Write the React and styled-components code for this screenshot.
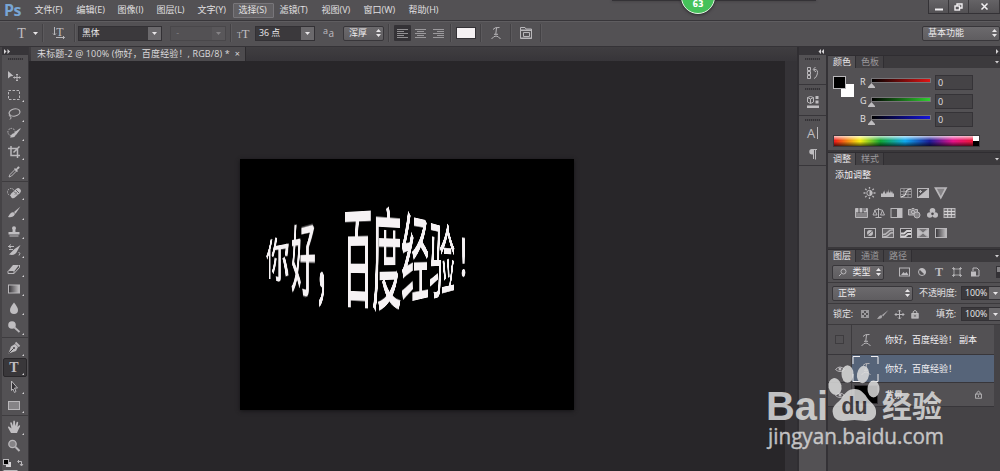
import React from 'react'
import styled, { createGlobalStyle } from 'styled-components'

const GlobalStyle = createGlobalStyle`
  * { box-sizing: border-box; }
  body {
    margin: 0;
    overflow: hidden;
    background: #282629;
    color: #e2e0e2;
    font-family: "Open Sans", "Noto Sans CJK SC", sans-serif;
    font-size: 9px;
    line-height: 12px;
  }
  svg { display: block; flex: none; overflow: visible; }
`

const Window = styled.div`
  display: flex;
  flex-direction: column;
  position: relative;
  width: 1000px;
  height: 471px;
  overflow: hidden;
  white-space: nowrap;
`

const MenuBar = styled.div`
  display: flex;
  align-items: center;
  flex: none;
  height: 21px;
  background: #535154;
  border-bottom: 1px solid #38363a;
`

const Logo = styled.div`
  width: 28.5px;
  padding-left: 4px;
  color: #78a5d4;
  font: bold 16px/18px "Open Sans", sans-serif;
  letter-spacing: -0.5px;
`

const MenuItem = styled.div`
  width: ${props => props.$w}px;
  height: 15px;
  padding-left: 5px;
  line-height: 12px;
  font-size: 9px;
  letter-spacing: 0;
  border: 1px solid ${props => props.$open ? '#78767a' : 'transparent'};
  border-radius: 1px;
  background: ${props => props.$open ? '#626063' : 'transparent'};
`

const WindowButtons = styled.div`
  display: flex;
  align-self: flex-start;
  margin-left: auto;
  height: 14px;
  border: 1px solid #343236;
  border-width: 0 0 1px 1px;
  background: linear-gradient(#656366, #535154);
`

const WindowButton = styled.div`
  display: flex;
  align-items: center;
  justify-content: center;
  width: ${props => props.$w}px;
  border-right: 1px solid #3a383b;
`

const Badge = styled.div`
  position: absolute;
  left: 681px;
  top: -20px;
  width: 34px;
  height: 34px;
  padding-top: 18px;
  border: 1.5px solid #e4f3e5;
  border-radius: 50%;
  background: #45c15a;
  box-shadow: 0 1px 3px #2c2a2d;
  color: #fff;
  font: bold 8px/12px "DejaVu Sans", sans-serif;
  text-align: center;
`

const BadgeShade = styled.div`
  position: absolute;
  left: 612px;
  top: 0;
  width: 204px;
  height: 1px;
  background: #343236;
  box-shadow: 0 0 3px #302e32;
`

const OptionsBar = styled.div`
  display: flex;
  align-items: center;
  flex: none;
  height: 26px;
  padding-bottom: 2px;
  background: #535154;
  border-top: 1px solid #5f5d60;
  border-bottom: 1px solid #353337;
`

const Slot = styled.div`
  display: flex;
  align-items: center;
  justify-content: center;
  flex: none;
  width: ${props => props.$w}px;
  height: 16px;
  border-radius: 1px;
  background: ${props => props.$active ? '#343236' : 'transparent'};
`

const Divider = styled.div`
  flex: none;
  width: 2px;
  height: 18px;
  background: #444245;
  border-right: 1px solid #5c5a5d;
`

const Combo = styled.div`
  display: flex;
  align-items: center;
  flex: none;
  width: ${props => props.$w}px;
  height: ${props => props.$h || 15}px;
  padding-left: 3px;
  border: 1px solid ${props => props.$dim ? '#49474a' : '#333135'};
  background: ${props => props.$dim ? '#535154' : '#3b393c'};
  color: ${props => props.$dim ? '#858386' : '#eceaec'};
  font-size: 8.8px;
`

const ComboArrow = styled.div`
  display: flex;
  align-items: center;
  justify-content: center;
  align-self: stretch;
  width: 13px;
  margin-left: auto;
  background: ${props => props.$dim ? '#59575a' : '#6b696c'};
`

const Select = styled.div`
  display: flex;
  align-items: center;
  justify-content: space-between;
  flex: none;
  width: ${props => props.$w}px;
  height: ${props => props.$h || 15}px;
  padding: 0 2px 0 5px;
  border: 1px solid #38363a;
  border-radius: 2px;
  background: linear-gradient(#6c6a6d, #5f5d60);
  color: #eceaec;
  font-size: 9px;
`

const ColorChip = styled.div`
  flex: none;
  width: 20px;
  height: 12px;
  border: 1px solid #343236;
  background: #f5f1f3;
`

const Workspace = styled.div`
  display: flex;
  flex: 1;
  min-height: 0;
`

const Toolbar = styled.div`
  display: flex;
  flex-direction: column;
  flex: none;
  width: 29px;
  border-left: 2px solid #454346;
  border-right: 1px solid #38363a;
  background: #535154;
`

const StripHeader = styled.div`
  display: flex;
  align-items: center;
  justify-content: ${props => props.$end ? 'space-between' : 'flex-start'};
  flex: none;
  height: 8px;
  padding: 0 1px;
  background: #373539;
`

const Grip = styled.div`
  flex: none;
  width: 15px;
  height: 2px;
  margin: ${props => props.$m || '3px auto 0'};
  background: repeating-linear-gradient(90deg, #343236 0 1px, #49474a 1px 2px);
`

const VerticalGrip = styled.div`
  width: 2px;
  height: 15px;
  margin: 0 10px 0 4px;
  background: repeating-linear-gradient(#3d3b3e 0 1px, #5d5b5e 1px 2px);
`

const ToolGroup = styled.div`
  flex: none;
  padding: 0 1px;
  margin-bottom: 1px;
  border-bottom: 1px solid ${props => props.$last ? 'transparent' : '#3e3c3f'};
`

const Tool = styled.div`
  display: flex;
  align-items: center;
  justify-content: center;
  position: relative;
  height: 19.2px;
  padding-right: 2px;
  border-radius: 2px;
  border: 1px solid ${props => props.$active ? '#29272a' : 'transparent'};
  background: ${props => props.$active ? '#39373a' : 'transparent'};
  &:after {
    content: "";
    display: ${props => props.$plain ? 'none' : 'block'};
    position: absolute;
    right: 2px;
    bottom: 1px;
    border: 1px solid #d5d3d5;
    border-left-color: transparent;
    border-top-color: transparent;
  }
`

const Document = styled.div`
  display: flex;
  flex-direction: column;
  flex: 1;
  min-width: 0;
`

const TabStrip = styled.div`
  flex: none;
  height: 14px;
  padding-left: 2px;
  background: linear-gradient(#403e41, #373539);
`

const DocumentTab = styled.div`
  display: flex;
  align-items: center;
  justify-content: space-between;
  width: 215px;
  height: 14px;
  padding: 0 5px 0 6px;
  background: #4d4b4e;
  border-right: 1px solid #2d2b2e;
  font-size: 9px;
  letter-spacing: 0.13px;
  color: #dcdadc;
`

const Stage = styled.div`
  display: flex;
  flex: 1;
  align-items: flex-start;
  padding: 98px 0 0 211px;
  border-right: 12px solid #353337;
  background: #282629;
`

const Artboard = styled.div`
  position: relative;
  width: 334px;
  height: 251px;
  background: #000;
  box-shadow: 0 1px 4px #151416;
`

// Every glyph is squeezed into a trapezoid, $l and $r being its left and right heights
const EM = 60
const warp = ({ $w, $l, $r }) => {
  const g = ($l / $r - 1) / EM
  const a = $w * (1 + g * EM) / EM
  return `matrix3d(${a},0,0,${g.toFixed(7)}, 0,${$l / EM},0,0, 0,0,1,0, 0,0,0,1)`
}

const Glyph = styled.span`
  position: absolute;
  left: ${props => props.$x}px;
  top: ${props => props.$y - EM * 0.556}px;
  width: ${EM}px;
  height: ${EM}px;
  color: #f6f2f4;
  font: 500 ${EM}px/${EM}px "Noto Sans CJK SC", sans-serif;
  transform-origin: 0 55.6%;
  transform: ${warp};
`

const Side = styled.div`
  display: flex;
  flex-direction: column;
  flex: none;
  width: 203px;
  border-left: 2px solid #302e32;
`

const SideColumns = styled.div`
  display: flex;
  flex: 1;
  min-height: 0;
`

const Dock = styled.div`
  flex: none;
  width: 29px;
  background: #535154;
  border-right: 2px solid #343236;
`

const DockGroup = styled.div`
  display: flow-root;
  height: ${props => props.$h}px;
  border-bottom: 1px solid #38363a;
`

const DockButton = styled.div`
  display: flex;
  align-items: center;
  justify-content: center;
  height: ${props => props.$h}px;
`

const Panels = styled.div`
  display: flex;
  flex-direction: column;
  flex: 1;
`

const PanelTabs = styled.div`
  display: flex;
  flex: none;
  height: 13px;
  background: #3c3a3d;
  border-top: 1px solid #2f2d31;
`

const PanelTab = styled.div`
  width: 28px;
  padding-left: 5px;
  border-right: 1px solid #302e32;
  background: ${props => props.$active ? '#535154' : '#434144'};
  color: ${props => props.$active ? '#e6e4e6' : '#9a989b'};
  font-size: 9px;
  line-height: 11px;
`

const FlyOut = styled.div`
  display: flex;
  align-items: center;
  margin-left: auto;
`

const ColorPanel = styled.div`
  flex: none;
  height: 84px;
  padding: 7px 0 0 5px;
  border-bottom: 2px solid #3a383b;
  background: #535154;
`

const ColorRows = styled.div`
  display: flex;
  height: 60px;
`

const Channels = styled.div`
  flex: 1;
`

const Channel = styled.div`
  display: flex;
  height: 18.5px;
`

const ChannelName = styled.div`
  width: 11px;
  font-size: 9px;
  line-height: 13px;
`

const Track = styled.div`
  width: 60px;
  height: 5px;
  margin-top: 3px;
  border: 1px solid #767477;
  background: linear-gradient(90deg, #000, ${props => props.$color});
`

const Knob = styled.svg`
  margin-left: -3px;
`

const ChannelValue = styled.div`
  width: 38px;
  height: 15px;
  margin-left: 4px;
  padding-left: 2px;
  border: 1px solid #353337;
  background: #454346;
  font-size: 9px;
  line-height: 14px;
`

const Spectrum = styled.div`
  display: flex;
  width: 147px;
  height: 12px;
  border: 1px solid #3b393c;
  background:
    linear-gradient(rgba(255,255,255,.75), rgba(255,255,255,0) 45%, rgba(0,0,0,0) 55%, rgba(0,0,0,.65)),
    linear-gradient(90deg, #f01818, #f6ee10 18%, #11a535 32%, #0fa8ee 49%, #1b1c96 66%, #e51288 82%, #ee1820);
`

const SpectrumEnds = styled.div`
  width: 6px;
  margin-left: auto;
  background: linear-gradient(#fff 50%, #000 50%);
`

const Adjustments = styled.div`
  flex: none;
  height: 84px;
  padding: 4px 0 0 7px;
  border-bottom: 2px solid #3a383b;
  background: #535154;
`

const AdjustRow = styled.div`
  display: flex;
  align-items: center;
  height: 20px;
  gap: 4.8px;
  padding-left: ${props => props.$indent}px;
`

const AdjustTitle = styled.div`
  height: 14px;
  font-size: 9px;
  color: #f2f0f2;
`

const Layers = styled.div`
  display: flex;
  flex-direction: column;
  flex: 1;
  background: #454346;
`

const LayerBar = styled.div`
  display: flex;
  align-items: center;
  flex: none;
  height: ${props => props.$h}px;
  padding-left: 4px;
  border-bottom: 1px solid #3c3a3d;
  background: #535154;
`

const BarLabel = styled.div`
  flex: none;
  width: ${props => props.$w}px;
  font-size: 9px;
  letter-spacing: -0.1px;
`

const Layer = styled.div`
  display: flex;
  align-items: center;
  flex: none;
  width: 166px;
  height: ${props => props.$h}px;
  background: linear-gradient(90deg, #535154 23px, ${props => props.$active ? '#566479' : '#535154'} 23px);
  border-bottom: 1px solid #38363a;
`

const Visibility = styled.div`
  display: flex;
  align-items: center;
  justify-content: center;
  align-self: stretch;
  width: 24px;
  border-right: 1px solid #3d3b3e;
`

const HiddenBox = styled.div`
  width: 9px;
  height: 9px;
  border: 1px solid #3e3c3f;
`

const Thumb = styled.div`
  display: flex;
  align-items: center;
  justify-content: center;
  width: 27px;
  height: 26px;
`

const LayerName = styled.div`
  flex: 1;
  padding-left: 6px;
  font: 9px/12px "Noto Sans CJK SC", sans-serif;
  color: #f4f2f4;
`

const Watermark = styled.svg`
  position: absolute;
  left: 760px;
  top: 358px;
`

const Icon = ({ w = 14, h = 14, children }) => (
  <svg width={w} height={h} viewBox={`0 0 ${w} ${h}`} fill="none" stroke="#b9b7ba" strokeWidth="1">
    {children}
  </svg>
)

const Down = ({ dim }) => (
  <svg width="5" height="3"><path d="M0 0H5L2.5 3Z" fill={dim ? '#858386' : '#e8e6e8'} /></svg>
)

const UpDown = () => (
  <svg width="5" height="8"><path d="M0 3H5L2.5 0ZM0 5H5L2.5 8Z" fill="#e8e6e8" /></svg>
)

const fill = { fill: '#bfbdc0', stroke: 'none' }
const serif = { ...fill, fontFamily: 'Liberation Serif', fontWeight: 'bold' }

const WarpIcon = () => (
  <Icon w={12} h={14}>
    <path d="M3 3.500Q4.500 1 9.500 1.500M6.500 1.800L5.800 8M4 8.300H8M1.500 13Q6 7 10.500 13" />
  </Icon>
)

const LockIcon = ({ size = 11 }) => (
  <svg width={size} height={size} viewBox="0 0 11 11" fill="none" stroke="#c6c4c6">
    <rect x="2" y="5" width="7" height="5" fill={size > 9 ? '#b0aeb0' : 'none'} />
    <path d="M3.5 5V3Q5.5 0 7.5 3V5" />
    <path d="M5.5 6.5V8.5" stroke={size > 9 ? '#454346' : '#c6c4c6'} />
  </svg>
)

const EyeIcon = () => (
  <Icon w={10} h={8}>
    <path d="M.5 4.5Q5-.5 9.5 4.5Q5 8.5.5 4.5Z" /><circle cx="5" cy="4" r="1.5" {...fill} />
  </Icon>
)

const MenuIcon = () => (
  <svg width="8" height="8"><path d="M0 3H4L2 5.5Z" fill="#d2d0d2" /><path d="M5 2.5H8M5 4.5H8M5 6.5H8" stroke="#858386" /></svg>
)

const tools = [
  [
    <><path d="M1 2L6.5 7L3.8 7.3L1 9.5Z" {...fill} /><path d="M10 5V12M6.5 8.5H13.5M9 6L10 5L11 6M9 11L10 12L11 11M7.5 7.5L6.5 8.5L7.5 9.5M12.5 7.5L13.5 8.5L12.5 9.5" /></>,
    <rect x="1.5" y="2.5" width="11" height="9" strokeDasharray="2.5 1.5" />,
    <><ellipse cx="7.5" cy="5.5" rx="5.5" ry="3.6" transform="rotate(-12 7.5 5.5)" strokeWidth="1.2" /><path d="M3 7.5Q1 9 3.5 9.5Q5 11 3 12.5" /></>,
    <><circle cx="4.5" cy="6" r="3.6" strokeDasharray="1.6 1" /><path d="M13.500 2L8 6L7 8.5L9 9L13.5 3Z" {...fill} /><path d="M3 11.500Q5 6 8.5 7.5Q9.500 12 3 11.500Z" {...fill} /></>,
    <path d="M4 1V10.5H13M1 3.5H10.5V13M6.500 7.500L12.5 1.5" strokeWidth="1.5" />,
    <><path d="M2 12L3 9.5L8 4.5L9.5 6L4.5 11Z" /><path d="M7 4L8 3L9 4L11 1.5Q13 1 12.5 3L10 5L11 6L10 7Z" {...fill} /></>
  ],
  [
    <><circle cx="4" cy="6" r="3.5" strokeDasharray="1.5 1" /><rect x="2.500" y="4.5" width="12" height="5.500" rx="2.500" transform="rotate(-42 8.5 7)" {...fill} /><path d="M7 5.5L10 8.5M9 4L12 7M8 8.5V8M9.5 6.5V6" stroke="#626063" /></>,
    <><path d="M13.5 1.5L7 7L8.5 8.7Z" {...fill} /><path d="M1 12Q4 6 7 7.5L8 9Q6 13 1 12Z" {...fill} /></>,
    <path d="M5 4.2A2 2 0 1 1 9 4.2Q8 6 8.5 8H12.5V10.5H1.5V8H5.5Q6 6 5 4.2M2.5 12.5H11.5V11.5H2.5Z" {...fill} />,
    <><path d="M1 3.5H7M2 6.5H6M11.5 9Q14 10 12 12.5M4 1.5L1.5 3.5L4 5" /><path d="M13.500 2L7.5 6L2 11.5Q8 13 10 8.5Z" {...fill} /></>,
    <><path d="M1 9L6 3H12L7.5 9Z" {...fill} /><path d="M1 9V11.5H7L12.5 5.5V3M7 11.5V9" /></>,
    <rect x="1.5" y="3" width="11" height="8" fill="url(#toolGradient)" />,
    <path d="M7 1.5Q11 6.5 11 9A4 4 0 0 1 3 9Q3 6.5 7 1.5Z" {...fill} />,
    <><circle cx="5" cy="5" r="3.8" {...fill} /><path d="M7.5 7.5L12.500 12" strokeWidth="1.8" /></>
  ],
  [
    <><path d="M1.500 12.500L4 5.5L8 3L11 6L9 10Z" {...fill} /><path d="M8.5 1.5L12.5 5.5" strokeWidth="2" /><path d="M2 12L6.5 7.5" stroke="#474548" /><circle cx="7" cy="7" r="1" fill="#474548" stroke="none" /></>,
    <text x="7" y="12" fontSize="14" textAnchor="middle" {...serif}>T</text>,
    <path d="M4.5 1L10.5 8H7.5L9 11.5L7.5 12.5L6 9L4.5 10.5Z" fill="#343236" />,
    <rect x="1.500" y="2.5" width="11" height="8" fill="#858386" />
  ],
  [
    <path d="M4 13L1.500 8.500Q0 6 2 6.500L4.500 8.500L3.200 3Q3.500 1.800 4.700 2.600L6 6L6.300 1Q7 0 7.900 1L8.300 6L9.700 2Q10.800 1.500 11.200 2.400L10.500 7L12.200 5.200Q13.500 5 13 6.500L10.800 11L10 13Z" {...fill} />,
    <><circle cx="5.5" cy="5" r="3.7" fill="#858386" strokeWidth="1.3" /><path d="M8.5 8L12.500 12" strokeWidth="2" /></>
  ]
]

const plainTools = ['0-0', '3-1']

const adjustments = [
  [
    <><circle cx="6.5" cy="6" r="2.7" /><path d="M6.5 3.3A2.7 2.7 0 0 1 6.5 8.7Z" {...fill} /><path d="M6.5 0V1.8M6.5 10.2V12M.5 6H2.5M10.5 6H12.5M2.2 1.7L3.6 3.1M9.4 8.9L10.8 10.3M10.8 1.7L9.4 3.1M3.6 8.9L2.2 10.3" strokeWidth="1.3" /></>,
    <path d="M0 10V7L1 6L2 7V4L3 6L4 3V6L5 7L6 4L7 6L8 2V6L9 5V3L10 6L11 4L12 7L13 6V10Z" {...fill} />,
    <><path d="M1.5 1.5H12.5V10.5H1.5ZM1 4.5H13M1 7.5H13M5 1V11M9 1V11" stroke="#918f92" /><path d="M2 10Q7 9 7 6Q7 2 12 2" stroke="#eceaec" /></>,
    <><rect x="1.5" y="1.5" width="11" height="9" /><path d="M1 11L13 1V11Z" {...fill} /><path d="M3 4.5H6M4.5 3V6" /></>,
    <path d="M1.5 1H12L6.8 10.8Z" fill="#858386" strokeWidth="1.7" />
  ],
  [
    <><path d="M.5 1.5H12.5V10.5H.5Z" fill="#858386" /><path d="M1 2H12V5H1Z" {...fill} /><path d="M4 1V6M8 1V6M10 1V4" stroke="#474548" /></>,
    <path d="M6.5 1V10.5M3.5 10.5H9.5M2 3.5L6.5 2L11 3.5M3 3.5L1 8H5L3 3.5M10.5 3.5L8.5 8H12.5L10.5 3.5" />,
    <><rect x="1" y="1.5" width="11" height="9" /><path d="M7 2H12V10.5H7Z" {...fill} /></>,
    <><path d="M.5 2.5H3L4 1.5H6L7 2.5H9.5V8H.5Z" fill="#858386" /><circle cx="5" cy="5" r="1.7" /><circle cx="9" cy="8" r="3" fill="#858386" /></>,
    <><circle cx="6.5" cy="3.7" r="2.8" {...fill} /><circle cx="3.8" cy="8" r="2.8" {...fill} /><circle cx="9.2" cy="8" r="2.8" {...fill} /><circle cx="6.5" cy="6.7" r="1.3" fill="#474548" stroke="none" /></>,
    <><rect x="1" y="1.5" width="11" height="9" fill="#767477" /><path d="M1 4.5H12M1 7.5H12M4.7 1.5V10.5M8.3 1.5V10.5" stroke="#d5d3d5" /></>
  ],
  [
    <><rect x="1.5" y="1.5" width="11" height="9" /><circle cx="7" cy="6" r="3" {...fill} /><path d="M4 8.500L10 3.500" stroke="#69676a" /></>,
    <><rect x="1.5" y="1.5" width="11" height="9" fill="#69676a" /><path d="M2 7.500Q5 7.500 7 5T12 3M2 10Q6 10 8 7.500T12 6" strokeWidth="1.4" /></>,
    <><rect x="1.5" y="1.5" width="11" height="9" fill="#474548" /><path d="M2 6.500H5L8 4H12M2 9.500H6L9 7H12" strokeWidth="1.8" stroke="#d5d3d5" /></>,
    <><rect x="1.5" y="1.5" width="11" height="9" fill="#767477" /><path d="M2 2L7 6L2 10ZM12 2L7 6L12 10Z" {...fill} /><path d="M2 1.5L7 6L12 1.5M2 10.5L7 6L12 10.5" strokeWidth=".8" /></>,
    <rect x="1.5" y="1.5" width="11" height="9" fill="url(#toolGradient)" />
  ]
]

const menus = [
  ['文件(F)', 42], ['编辑(E)', 41], ['图像(I)', 39], ['图层(L)', 41], ['文字(Y)', 41],
  ['选择(S)', 41], ['滤镜(T)', 42], ['视图(V)', 42], ['窗口(W)', 45], ['帮助(H)', 42]
]

const glyphs = [
  { c: '你', x: 26, y: 100, w: 24, l: 40, r: 56 },
  { c: '好', x: 50.5, y: 100, w: 25, l: 70, r: 87 },
  { c: '，', x: 75, y: 99, w: 28, l: 96, r: 106 },
  { c: '百', x: 103, y: 98.5, w: 29.5, l: 107, r: 111 },
  { c: '度', x: 131.5, y: 100, w: 29.5, l: 114, r: 108 },
  { c: '经', x: 161, y: 99, w: 28, l: 104, r: 89 },
  { c: '验', x: 189, y: 101, w: 26, l: 88, r: 71 },
  { c: '！', x: 217, y: 98.5, w: 22, l: 55, r: 43 }
]

const Options = () => (
  <OptionsBar>
    <VerticalGrip />
    <Slot $w={15}><Icon><text x="6.5" y="11.5" fontSize="14" textAnchor="middle" {...serif} fontWeight="normal">T</text></Icon></Slot>
    <Slot $w={13}><Down /></Slot>
    <Divider />
    <Slot $w={30}>
      <Icon w={14}>
        <text x="8" y="9.5" fontSize="12" textAnchor="middle" {...serif} fontWeight="normal">T</text>
        <path d="M2.5 1V9M1 7.5L2.5 9L4 7.5M4 11.5H12.5M11 10L12.5 11.5L11 13" />
      </Icon>
    </Slot>
    <Divider />
    <Slot $w={2} />
    <Combo $w={84}>黑体<ComboArrow><Down /></ComboArrow></Combo>
    <Slot $w={8} />
    <Combo $w={56} $dim>&nbsp;-<ComboArrow $dim><Down dim /></ComboArrow></Combo>
    <Slot $w={4} />
    <Divider />
    <Slot $w={23}>
      <Icon w={13}>
        <text x="8.5" y="12" fontSize="13" textAnchor="middle" {...serif} fontWeight="normal">T</text>
        <text x="2.5" y="12" fontSize="8" textAnchor="middle" {...serif} fontWeight="normal">T</text>
      </Icon>
    </Slot>
    <Combo $w={60}>36 点<ComboArrow><Down /></ComboArrow></Combo>
    <Slot $w={28}>
      <Icon w={12}>
        <text x="0" y="7.5" fontSize="9" {...fill} fontFamily="Open Sans">a</text>
        <text x="5.5" y="11" fontSize="10" {...fill} fontFamily="Open Sans">a</text>
      </Icon>
    </Slot>
    <Select $w={41}>浑厚<UpDown /></Select>
    <Slot $w={4} />
    <Divider />
    <Slot $w={4} />
    <Slot $w={17} $active><Icon w={11} h={11}><path d="M0 1.5H11M0 3.5H7M0 5.5H11M0 7.5H7M0 9.5H11" stroke="#918f92" /></Icon></Slot>
    <Slot $w={18}><Icon w={11} h={11}><path d="M0 1.5H11M2 3.5H9M0 5.5H11M2 7.5H9M0 9.5H11" stroke="#9b999c" /></Icon></Slot>
    <Slot $w={18}><Icon w={11} h={11}><path d="M0 1.5H11M4 3.5H11M0 5.5H11M4 7.5H11M0 9.5H11" stroke="#9b999c" /></Icon></Slot>
    <Slot $w={3} />
    <Divider />
    <Slot $w={4} />
    <ColorChip />
    <Slot $w={4} />
    <Divider />
    <Slot $w={28}><WarpIcon /></Slot>
    <Divider />
    <Slot $w={28}><Icon w={12} h={12}><path d="M.5 3.5V.5H5L6 2H11.5V11.5H.5V3.5H11.5M3.5 5.5H9.5V9.5H3.5Z" /><path d="M0 3H12M1 11H12" /></Icon></Slot>
    <Divider />
    <Slot $w={380} />
    <Select $w={78}>基本功能<UpDown /></Select>
  </OptionsBar>
)

const ToolPanel = () => (
  <Toolbar>
    <StripHeader><svg width="8" height="5"><path d="M1 0V5L3.5 2.5ZM4.5 0V5L7 2.5Z" fill="#d5d3d5" /></svg></StripHeader>
    <Grip $m="3px auto 6px" />
    {tools.map((group, i) => (
      <ToolGroup key={i} $last={i === 3}>
        {group.map((icon, j) => (
          <Tool key={j} $active={i === 2 && j === 1} $plain={plainTools.includes(i + '-' + j)}>
            <Icon>{icon}</Icon>
          </Tool>
        ))}
      </ToolGroup>
    ))}
    <Icon w={26} h={16}>
      <rect x="4" y="4" width="5" height="5" fill="#d5d3d5" stroke="none" />
      <rect x="1.5" y="1.5" width="5" height="5" fill="#000" />
      <path d="M16 3.5H19.5V7.5M17 2L15.5 3.5L17 5M18 6L19.5 8L21 6" />
      <rect x="2" y="12.500" width="13" height="9" fill="#000" />
    </Icon>
  </Toolbar>
)

const channels = [['R', '#e01414'], ['G', '#30d030'], ['B', '#1414dc']]

const ColorArea = () => (
  <ColorPanel>
    <ColorRows>
      <Icon w={27} h={26}>
        <rect x="8" y="9" width="13" height="13" fill="#fff" stroke="none" />
        <rect x="0.5" y="1.5" width="12" height="12" fill="#000" />
      </Icon>
      <Channels>
        {channels.map(([name, color]) => (
          <Channel key={name}>
            <ChannelName>{name}</ChannelName>
            <div>
              <Track $color={color} />
              <Knob width="7" height="5"><path d="M3.5 0L7 4V5H0V4Z" fill="#bfbdc0" /></Knob>
            </div>
            <ChannelValue>0</ChannelValue>
          </Channel>
        ))}
      </Channels>
    </ColorRows>
    <Spectrum><SpectrumEnds /></Spectrum>
  </ColorPanel>
)

const Tabs = ({ names }) => (
  <PanelTabs>
    {names.map((name, i) => <PanelTab key={name} $active={i === 0}>{name}</PanelTab>)}
    <FlyOut><MenuIcon /></FlyOut>
  </PanelTabs>
)

const LayersPanel = () => (
  <Layers>
    <LayerBar $h={21}>
      <Select $w={52} $h={15}>
        <Icon w={9} h={9}><circle cx="5.5" cy="3.5" r="2.5" /><path d="M3.5 5.5L1 8" /></Icon>类型<UpDown />
      </Select>
      <Slot $w={11} />
      <Slot $w={18}><Icon w={11} h={10}><rect x=".5" y="1" width="10" height="8" /><path d="M2 8L4.5 5L6 6.500L7.5 5L9.5 8Z" {...fill} /></Icon></Slot>
      <Slot $w={17}><Icon w={10} h={10}><circle cx="5" cy="5" r="3.500" /><path d="M2.2 2.2A4 4 0 0 1 7.8 7.8Z" {...fill} /></Icon></Slot>
      <Slot $w={18}><Icon w={10} h={12}><text x="5" y="10" fontSize="12" textAnchor="middle" {...serif}>T</text></Icon></Slot>
      <Slot $w={18}><Icon w={10} h={10}><path d="M2 2H8V8H2ZM0 1.5H3M1.5 0V3M7 1.5H10M8.5 0V3M0 8.5H3M1.5 7V10M7 8.5H10M8.5 7V10" strokeWidth=".8" /></Icon></Slot>
      <Slot $w={18}><Icon w={10} h={10}><path d="M3 4V1H7L9 3V9H6" /><rect x="1" y="4.5" width="5" height="5" {...fill} /></Icon></Slot>
      <Slot $w={12} />
      <Icon w={6} h={12}><rect x=".5" y=".5" width="9" height="11" fill="#343236" stroke="#343236" /><rect x="1" y="1" width="7" height="5" fill="#858386" stroke="none" /></Icon>
    </LayerBar>
    <LayerBar $h={21}>
      <Select $w={81}>正常<UpDown /></Select>
      <Slot $w={6} />
      <BarLabel $w={42}>不透明度:</BarLabel>
      <Combo $w={42} $h={14}>100%<ComboArrow><Down /></ComboArrow></Combo>
    </LayerBar>
    <LayerBar $h={21}>
      <Slot $w={1} />
      <BarLabel $w={24}>锁定:</BarLabel>
      <Slot $w={16}><Icon w={8} h={8}><g opacity=".7"><rect x=".5" y=".5" width="7" height="7" /><path d="M1 1H3V3H1ZM5 1H7V3H5ZM3 3H5V5H3ZM1 5H3V7H1ZM5 5H7V7H5Z" {...fill} /></g></Icon></Slot>
      <Slot $w={20}><Icon w={12} h={11}><g opacity=".8"><path d="M11.5 1L5 6L6 7.5Z" {...fill} /><path d="M0 10Q3 5 5 6.5Q6 10 0 10Z" {...fill} /></g></Icon></Slot>
      <Slot $w={13}><Icon w={11} h={11}><path d="M5.5 1V10M1 5.5H10M4 2.5L5.5 1L7 2.5M4 8.5L5.5 10L7 8.5M2.5 4L1 5.5L2.5 7M8.5 4L10 5.5L8.5 7" /></Icon></Slot>
      <Slot $w={18}><LockIcon size={10} /></Slot>
      <Slot $w={12} />
      <BarLabel $w={25}>填充:</BarLabel>
      <Combo $w={42} $h={14}>100%<ComboArrow><Down /></ComboArrow></Combo>
    </LayerBar>
    <Layer $h={30}>
      <Visibility><HiddenBox /></Visibility>
      <Thumb><WarpIcon /></Thumb>
      <LayerName>你好，百度经验！ 副本</LayerName>
    </Layer>
    <Layer $h={28} $active>
      <Visibility><EyeIcon /></Visibility>
      <Thumb>
        <Icon w={27} h={26}>
          <path d="M1 8V.5H8M19 .5H26V8M26 18V25.500H19M8 25.500H1V18" stroke="#f0eef0" />
          <g transform="translate(8 6)"><path d="M3 3.5Q4.5 1 9.5 1.5M6.5 1.8L5.8 8M4 8.3H8M1.5 13Q6 7 10.5 13" /></g>
        </Icon>
      </Thumb>
      <LayerName>你好，百度经验！</LayerName>
    </Layer>
    <Layer $h={24}>
      <Visibility><EyeIcon /></Visibility>
      <Thumb><Icon w={24} h={19}><rect x=".5" y=".5" width="23" height="18" fill="#000" stroke="#302e32" /></Icon></Thumb>
      <LayerName>背景</LayerName>
      <Slot $w={32}><LockIcon size={9} /></Slot>
    </Layer>
  </Layers>
)

const App = () => (
  <Window>
    <GlobalStyle />
    <svg width="0" height="0" style={{ position: 'absolute' }}>
      <defs>
        <linearGradient id="toolGradient"><stop stopColor="#343236" /><stop offset="1" stopColor="#c6c4c6" /></linearGradient>
      </defs>
    </svg>
    <MenuBar>
      <Logo>Ps</Logo>
      {menus.map(([name, w]) => <MenuItem key={name} $w={w} $open={name === '选择(S)'}>{name}</MenuItem>)}
      <WindowButtons>
        <WindowButton $w={20}><svg width="8" height="8"><path d="M0 6.5H8" stroke="#f2f0f2" strokeWidth="2" /></svg></WindowButton>
        <WindowButton $w={20}><svg width="9" height="8" fill="none" stroke="#f2f0f2" strokeWidth="1.4"><path d="M3 3V1H8V5H6" /><rect x="1" y="3" width="4.5" height="4" /></svg></WindowButton>
        <WindowButton $w={31}><svg width="7" height="7"><path d="M.5.5L6.5 6.5M6.5.5L.5 6.5" stroke="#f2f0f2" strokeWidth="1.5" /></svg></WindowButton>
      </WindowButtons>
    </MenuBar>
    <Options />
    <Workspace>
      <ToolPanel />
      <Document>
        <TabStrip>
          <DocumentTab><span>未标题-2 @ 100% (你好，百度经验！, RGB/8) *</span><span>×</span></DocumentTab>
        </TabStrip>
        <Stage>
          <Artboard>
            {glyphs.map(g => <Glyph key={g.c} $x={g.x} $y={g.y} $w={g.w} $l={g.l} $r={g.r}>{g.c}</Glyph>)}
          </Artboard>
        </Stage>
      </Document>
      <Side>
        <StripHeader $end>
          <Slot $w={42}><svg width="6" height="5"><path d="M3 0V5L.5 2.5ZM6 0V5L3.5 2.5Z" fill="#d5d3d5" /></svg></Slot>
          <svg width="3" height="5"><path d="M0 0V5L2.5 2.5Z" fill="#d5d3d5" /></svg>
        </StripHeader>
        <SideColumns>
          <Dock>
            <DockGroup $h={30}>
              <Grip />
              <DockButton $h={26}><Icon><path d="M1.5 1.5H4.5V4.5H1.5ZM1.5 5.5H4.5V8.5H1.5ZM1.5 9.5H4.5V12.5H1.5ZM8 3.5Q13 3 11 9Q10 12 8 12.5M9.5 1L7 3.5L10 6" /></Icon></DockButton>
            </DockGroup>
            <DockGroup $h={31}>
              <Grip />
              <DockButton $h={24}><Icon><path d="M1.5 2.5L4.5 1.5L7.5 2.5V7L4.5 8.5L1.5 7ZM1.5 2.5L4.5 4L7.5 2.5M4.5 4V8.5" /><path d="M9.5 1H12.5V4H9.5ZM9.5 5.5H12.5V8.5H9.5ZM1 10.5H13V13H1Z" {...fill} /></Icon></DockButton>
            </DockGroup>
            <DockGroup $h={50}>
              <Grip />
              <DockButton $h={24}><Icon><text x="1" y="12" fontSize="13" {...fill} fontFamily="Open Sans">A</text><path d="M11.5 1V13" /></Icon></DockButton>
              <DockButton $h={18}><Icon w={12} h={12}><path d="M7 1H5A2.5 2.5 0 0 0 5 6.5H6V11H7Z" {...fill} /><path d="M5 1.5H10M8.5 1V11.5" /></Icon></DockButton>
            </DockGroup>
          </Dock>
          <Panels>
            <Tabs names={['颜色', '色板']} />
            <ColorArea />
            <Tabs names={['调整', '样式']} />
            <Adjustments>
              <AdjustTitle>添加调整</AdjustTitle>
              {adjustments.map((row, i) => (
                <AdjustRow key={i} $indent={i === 1 ? 19.5 : 28}>
                  {row.map((icon, j) => <Icon key={j} w={13} h={12}>{icon}</Icon>)}
                </AdjustRow>
              ))}
            </Adjustments>
            <Tabs names={['图层', '通道', '路径']} />
            <LayersPanel />
          </Panels>
        </SideColumns>
      </Side>
    </Workspace>
    <BadgeShade />
    <Badge>63</Badge>
    <Watermark width="190" height="96" fill="#dedede" opacity=".84">
      <text x="6" y="61.5" fontFamily="Liberation Sans" fontWeight="bold" fontSize="41" textLength="62" lengthAdjust="spacingAndGlyphs">Bai</text>
      <path d="M94.5 31C101 31 105 36 108 41C112 46 117 48 116 56C114 65 105 63 94.5 62C84 63 75 65 73 56C71 48 77 46 81 41C84 36 88 31 94.5 31Z" />
      <ellipse cx="75" cy="28.5" rx="6.5" ry="8.5" transform="rotate(-12 75 28.5)" />
      <ellipse cx="87.5" cy="16" rx="6" ry="8.700" />
      <ellipse cx="103" cy="16.5" rx="6" ry="8.700" transform="rotate(10 103 16.5)" />
      <ellipse cx="113.5" cy="31" rx="6" ry="8.5" />
      <text x="81.5" y="56" fill="#3e3c40" fontFamily="Liberation Sans" fontWeight="bold" fontSize="23" textLength="26" lengthAdjust="spacingAndGlyphs">du</text>
      <text x="122" y="59" fontFamily="Noto Sans CJK SC" fontWeight="bold" fontSize="30" textLength="60">经验</text>
      <text x="8" y="86" fontFamily="Open Sans" fontSize="21" stroke="#dedede" strokeWidth=".4" textLength="176" lengthAdjust="spacingAndGlyphs">jingyan.baidu.com</text>
    </Watermark>
  </Window>
)

export default App
